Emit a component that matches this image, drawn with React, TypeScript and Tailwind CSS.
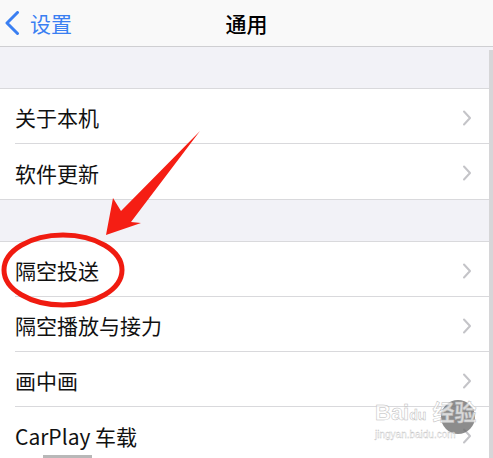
import React from "react";

const font = { fontFamily: '"Noto Sans CJK SC", "Noto Sans", sans-serif' };

function Chevron() {
  return (
    <svg width="10" height="16" viewBox="0 0 10 16" className="shrink-0">
      <path d="M2 1.5 L8 8 L2 14.5" fill="none" stroke="#c4c4c8" strokeWidth="2" strokeLinecap="round" strokeLinejoin="round" />
    </svg>
  );
}

function Row({ label, last }: { label: string; last?: boolean }) {
  return (
    <div className="flex h-[55px] items-stretch bg-white pl-[15px]">
      <div className={`flex flex-1 items-center justify-between pr-[21px] pt-[3px] ${last ? "" : "border-b border-[#d9d9dc]"}`}>
        <span className="text-[21px] leading-none text-[#111]">{label}</span>
        <Chevron />
      </div>
    </div>
  );
}

export default function App() {
  return (
    <div className="relative h-[458px] w-[493px] overflow-hidden bg-[#f2f2f7]" style={font}>
      {/* nav */}
      <div className="relative flex h-[47px] items-center border-b border-[#cfcfd2] bg-[#f9f9f9]">
        <div className="flex items-center pl-[5px]">
          <svg width="15" height="24" viewBox="0 0 15 24">
            <path d="M12.5 1.5 L2 12 L12.5 22.5" fill="none" stroke="#3a7ff2" strokeWidth="3" strokeLinecap="round" strokeLinejoin="round" />
          </svg>
          <span className="ml-[10px] text-[21px] leading-none text-[#3a7ff2]">设置</span>
        </div>
        <div className="absolute inset-x-0 top-0 flex h-full items-center justify-center">
          <span className="text-[21px] font-medium leading-none text-black">通用</span>
        </div>
      </div>
      <div className="h-[42px] border-b border-[#d9d9dc]" />
      <Row label="关于本机" />
      <Row label="软件更新" last />
      <div className="h-[43px] border-y border-[#d9d9dc]" />
      <Row label="隔空投送" />
      <Row label="隔空播放与接力" />
      <Row label="画中画" />
      <Row label="CarPlay 车载" last />

      {/* scrollbar strip */}
      <div className="absolute right-0 top-[50px] h-[408px] w-[4px] bg-[#d6d6d8]" />
      {/* bottom small bar */}
      <div className="absolute bottom-0 left-[43px] h-[3px] w-[49px] bg-[#b8b8b8]" />

      {/* red annotations */}
      <svg className="absolute left-0 top-0" width="493" height="458" viewBox="0 0 493 458">
        <ellipse cx="63" cy="270" rx="59" ry="35" fill="none" stroke="#f01b10" strokeWidth="5" />
        <polygon points="106,235 113,198 121,211 200,131 131,222 141,223" fill="#f51e14" />
      </svg>

      {/* baidu watermark */}
      <div className="absolute left-[441px] top-[400px] h-[34px] w-[34px] rounded-full bg-[#6f6f6f]/80" />
      <div className="absolute left-[375px] top-[402px] flex flex-col items-start">
        <span className="text-[22px] font-bold leading-none text-white/70" style={{ fontFamily: '"Liberation Sans", "Noto Sans CJK SC", sans-serif', WebkitTextStroke: "0.5px #bbb" }}>
          Bai<span className="text-[14px]">du</span> 经验
        </span>
        <span className="mt-[6px] text-[10px] leading-none text-white/70" style={{ fontFamily: '"Liberation Sans", sans-serif', WebkitTextStroke: "0.3px #bbb" }}>
          jingyan.baidu.com
        </span>
      </div>
    </div>
  );
}
